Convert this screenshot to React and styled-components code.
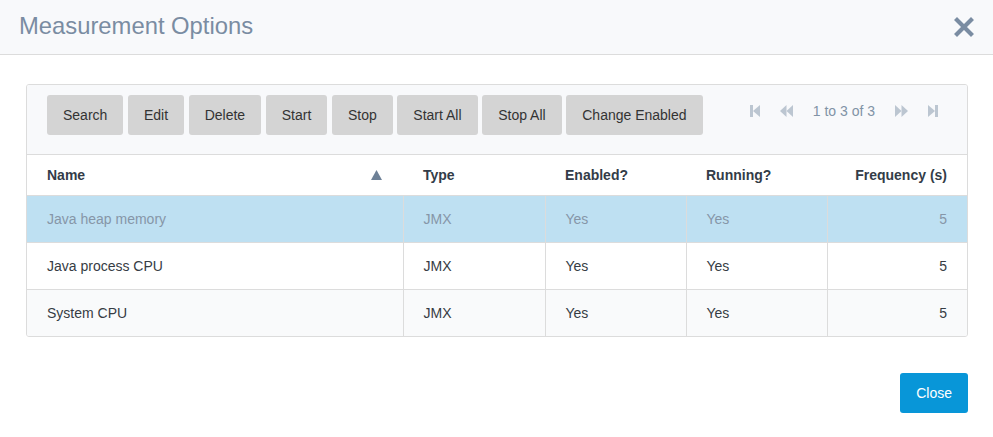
import React from 'react';
import styled, { createGlobalStyle } from 'styled-components';

const Global = createGlobalStyle`
  html, body { margin: 0; padding: 0; background: #fff; }
  body { font-family: "Liberation Sans", Arial, sans-serif; font-size: 14px; color: #333; }
`;

const Header = styled.div`
  height: 55px;
  box-sizing: border-box;
  background: #f8f9fb;
  border-bottom: 1px solid #dcdcdc;
  display: flex;
  align-items: center;
  justify-content: space-between;
  padding: 0 19px 3px 19px;
`;

const Title = styled.h2`
  margin: 0;
  font-size: 23.8px;
  font-weight: normal;
  color: #7a8ca2;
`;

const CloseX = styled.button`
  border: 0;
  background: none;
  padding: 0;
  display: flex;
  margin-top: 3px;
`;

const Body = styled.div`
  padding: 29px 25px 0 26px;
`;

const Panel = styled.div`
  border: 1px solid #dcdcdc;
  border-radius: 3px;
  overflow: hidden;
`;

const Toolbar = styled.div`
  background: #f8f9fb;
  border-bottom: 1px solid #dcdcdc;
  padding: 10px 20px 19px 20px;
  display: flex;
  align-items: flex-start;
`;

const Buttons = styled.div`
  display: flex;
  gap: 4.6px;
`;

const ToolButton = styled.button`
  height: 40px;
  padding: 0 16px;
  border: 0;
  border-radius: 3px;
  background: #d4d4d4;
  color: #333;
  font-family: inherit;
  font-size: 14px;
`;

const Pager = styled.div`
  display: flex;
  align-items: center;
  margin-left: auto;
  margin-right: 9px;
  height: 32px;
  gap: 20px;
  color: #8193a6;
  font-size: 14px;
`;

const PagerIcon = styled.span`
  display: flex;
`;

const Table = styled.table`
  width: 100%;
  border-collapse: collapse;
  table-layout: fixed;
`;

const Th = styled.th`
  height: 40px;
  padding: 0 20px;
  text-align: ${p => (p.$right ? 'right' : 'left')};
  font-weight: bold;
  font-size: 14px;
  color: #333c48;
  background: #fff;
  border-bottom: 1px solid #dcdcdc;
  position: relative;
`;

const SortArrow = styled.span`
  position: absolute;
  right: 21px;
  top: 15px;
  display: flex;
`;

const Tr = styled.tr`
  background: ${p => (p.$selected ? '#bee0f2' : p.$alt ? '#f9fafb' : '#fff')};
  color: ${p => (p.$selected ? '#8696a8' : '#363c44')};
`;

const Td = styled.td`
  height: 46px;
  padding: 0 20px;
  text-align: ${p => (p.$right ? 'right' : 'left')};
  border-bottom: 1px solid #dcdcdc;
  border-left: 1px solid #dcdcdc;
  &:first-child { border-left: 0; }
  tr:last-child > & { border-bottom: 0; }
`;

const Footer = styled.div`
  display: flex;
  justify-content: flex-end;
  padding-top: 36px;
`;

const PrimaryButton = styled.button`
  height: 40px;
  padding: 0 16px;
  border: 0;
  border-radius: 3px;
  background: #0896d8;
  color: #fff;
  font-family: inherit;
  font-size: 14px;
`;

const iconColor = '#bcc6d1';

const First = () => (
  <svg width="10" height="12" viewBox="0 0 10 12">
    <rect x="0" y="0" width="3" height="12" fill={iconColor} />
    <polygon points="10,0 10,12 3,6" fill={iconColor} />
  </svg>
);
const Prev = () => (
  <svg width="13" height="12" viewBox="0 0 13 12">
    <polygon points="6.5,0 6.5,12 0,6" fill={iconColor} />
    <polygon points="13,0 13,12 6.5,6" fill={iconColor} />
  </svg>
);
const Next = () => (
  <svg width="13" height="12" viewBox="0 0 13 12">
    <polygon points="0,0 0,12 6.5,6" fill={iconColor} />
    <polygon points="6.5,0 6.5,12 13,6" fill={iconColor} />
  </svg>
);
const Last = () => (
  <svg width="10" height="12" viewBox="0 0 10 12">
    <polygon points="0,0 0,12 7,6" fill={iconColor} />
    <rect x="7" y="0" width="3" height="12" fill={iconColor} />
  </svg>
);

const rows = [
  { name: 'Java heap memory', type: 'JMX', enabled: 'Yes', running: 'Yes', freq: 5 },
  { name: 'Java process CPU', type: 'JMX', enabled: 'Yes', running: 'Yes', freq: 5 },
  { name: 'System CPU', type: 'JMX', enabled: 'Yes', running: 'Yes', freq: 5 },
];

const actions = ['Search', 'Edit', 'Delete', 'Start', 'Stop', 'Start All', 'Stop All', 'Change Enabled'];

export default function App() {
  return (
    <>
      <Global />
      <Header>
        <Title>Measurement Options</Title>
        <CloseX aria-label="close">
          <svg width="20" height="20" viewBox="0 0 20 20">
            <path d="M3 3 L17 17 M17 3 L3 17" stroke="#7a8ca2" strokeWidth="4.2" strokeLinecap="square" />
          </svg>
        </CloseX>
      </Header>
      <Body>
        <Panel>
          <Toolbar>
            <Buttons>
              {actions.map(a => (
                <ToolButton key={a}>{a}</ToolButton>
              ))}
            </Buttons>
            <Pager>
              <PagerIcon><First /></PagerIcon>
              <PagerIcon><Prev /></PagerIcon>
              <span>1 to 3 of 3</span>
              <PagerIcon><Next /></PagerIcon>
              <PagerIcon><Last /></PagerIcon>
            </Pager>
          </Toolbar>
          <Table>
            <colgroup>
              <col style={{ width: 376 }} />
              <col style={{ width: 142 }} />
              <col style={{ width: 141 }} />
              <col style={{ width: 141 }} />
              <col />
            </colgroup>
            <thead>
              <tr>
                <Th>
                  Name
                  <SortArrow>
                    <svg width="11" height="10" viewBox="0 0 11 10">
                      <polygon points="5.5,0 11,10 0,10" fill="#6e8197" />
                    </svg>
                  </SortArrow>
                </Th>
                <Th>Type</Th>
                <Th>Enabled?</Th>
                <Th>Running?</Th>
                <Th $right>Frequency (s)</Th>
              </tr>
            </thead>
            <tbody>
              {rows.map((r, i) => (
                <Tr key={r.name} $selected={i === 0} $alt={i === 2}>
                  <Td>{r.name}</Td>
                  <Td>{r.type}</Td>
                  <Td>{r.enabled}</Td>
                  <Td>{r.running}</Td>
                  <Td $right>{r.freq}</Td>
                </Tr>
              ))}
            </tbody>
          </Table>
        </Panel>
        <Footer>
          <PrimaryButton>Close</PrimaryButton>
        </Footer>
      </Body>
    </>
  );
}
